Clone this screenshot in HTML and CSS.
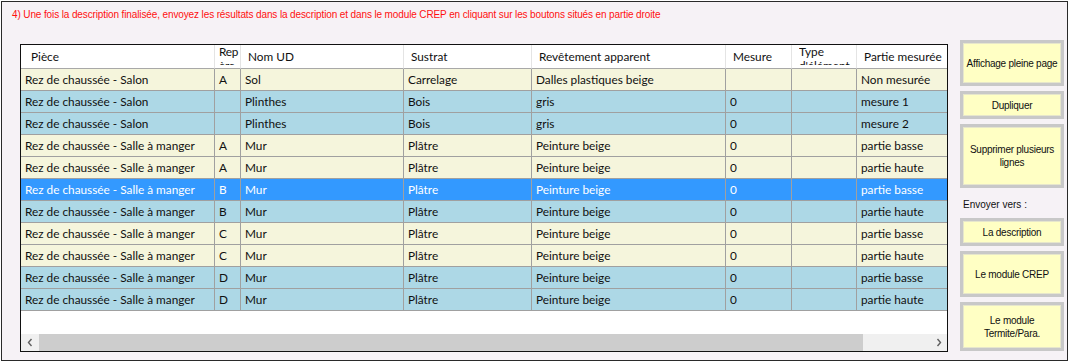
FILE: index.html
```html
<!DOCTYPE html>
<html lang="fr">
<head>
<meta charset="utf-8">
<title>Description</title>
<link rel="stylesheet" href="styles.css">
</head>
<body>
<div class="frame">
  <p class="msg">4) Une fois la description finalisée, envoyez les résultats dans la description et dans le module CREP en cliquant sur les boutons situés en partie droite</p>
  <div class="main">
    <div class="grid-box">
      <div class="viewport">
        <table class="grid">
          <colgroup>
            <col class="c1"><col class="c2"><col class="c3"><col class="c4"><col class="c5"><col class="c6"><col class="c7"><col class="c8">
          </colgroup>
          <thead>
            <tr>
              <th class="first"><div class="hc">Pièce</div></th>
              <th class="narrow"><div class="hc wrap brk">Repère</div></th>
              <th><div class="hc">Nom UD</div></th>
              <th><div class="hc">Sustrat</div></th>
              <th><div class="hc">Revêtement apparent</div></th>
              <th><div class="hc">Mesure</div></th>
              <th><div class="hc wrap">Type d'élément</div></th>
              <th><div class="hc">Partie mesurée</div></th>
            </tr>
          </thead>
          <tbody>
            <tr class="beige"><td>Rez de chaussée - Salon</td><td>A</td><td>Sol</td><td>Carrelage</td><td>Dalles plastiques beige</td><td></td><td></td><td>Non mesurée</td></tr>
            <tr class="blue"><td>Rez de chaussée - Salon</td><td></td><td>Plinthes</td><td>Bois</td><td>gris</td><td>0</td><td></td><td>mesure 1</td></tr>
            <tr class="blue"><td>Rez de chaussée - Salon</td><td></td><td>Plinthes</td><td>Bois</td><td>gris</td><td>0</td><td></td><td>mesure 2</td></tr>
            <tr class="beige"><td>Rez de chaussée - Salle à manger</td><td>A</td><td>Mur</td><td>Plâtre</td><td>Peinture beige</td><td>0</td><td></td><td>partie basse</td></tr>
            <tr class="beige"><td>Rez de chaussée - Salle à manger</td><td>A</td><td>Mur</td><td>Plâtre</td><td>Peinture beige</td><td>0</td><td></td><td>partie haute</td></tr>
            <tr class="sel"><td>Rez de chaussée - Salle à manger</td><td>B</td><td>Mur</td><td>Plâtre</td><td>Peinture beige</td><td>0</td><td></td><td>partie basse</td></tr>
            <tr class="blue"><td>Rez de chaussée - Salle à manger</td><td>B</td><td>Mur</td><td>Plâtre</td><td>Peinture beige</td><td>0</td><td></td><td>partie haute</td></tr>
            <tr class="beige"><td>Rez de chaussée - Salle à manger</td><td>C</td><td>Mur</td><td>Plâtre</td><td>Peinture beige</td><td>0</td><td></td><td>partie basse</td></tr>
            <tr class="beige"><td>Rez de chaussée - Salle à manger</td><td>C</td><td>Mur</td><td>Plâtre</td><td>Peinture beige</td><td>0</td><td></td><td>partie haute</td></tr>
            <tr class="blue"><td>Rez de chaussée - Salle à manger</td><td>D</td><td>Mur</td><td>Plâtre</td><td>Peinture beige</td><td>0</td><td></td><td>partie basse</td></tr>
            <tr class="blue"><td>Rez de chaussée - Salle à manger</td><td>D</td><td>Mur</td><td>Plâtre</td><td>Peinture beige</td><td>0</td><td></td><td>partie haute</td></tr>
          </tbody>
        </table>
      </div>
      <div class="hscroll">
        <span class="arrow"><svg width="8" height="9" viewBox="0 0 8 9"><path d="M5.5 1 L2.5 4.5 L5.5 8" fill="none" stroke="#606060" stroke-width="1.4"/></svg></span>
        <div class="track"><div class="thumb"></div></div>
        <span class="arrow"><svg width="8" height="9" viewBox="0 0 8 9"><path d="M2.5 1 L5.5 4.5 L2.5 8" fill="none" stroke="#606060" stroke-width="1.4"/></svg></span>
      </div>
    </div>
    <div class="side">
      <button class="btn tall">Affichage pleine page</button>
      <button class="btn short">Dupliquer</button>
      <button class="btn tall2">Supprimer plusieurs lignes</button>
      <div class="label">Envoyer vers :</div>
      <button class="btn short">La description</button>
      <button class="btn tall">Le module CREP</button>
      <button class="btn tall3">Le module<br>Termite/Para.</button>
    </div>
  </div>
</div>
</body>
</html>
```

FILE: styles.css
```css
* { box-sizing: border-box; }
html, body { margin: 0; padding: 0; background: #ffffff; }
body { font-family: "Lato", "Liberation Sans", sans-serif; }

.frame {
  margin: 1px;
  width: 1067px;
  height: 360px;
  border: 1px solid #2a2a2a;
  background: #f6f2f6;
  padding: 0;
}

.msg {
  margin: 0;
  padding: 7px 0 0 10px;
  height: 38px;
  font-family: "Liberation Sans", sans-serif;
  font-size: 10px;
  color: #ff1010;
  letter-spacing: -0.12px;
}

.main {
  display: flex;
  align-items: flex-start;
  padding-left: 18px;
}

.grid-box {
  margin-top: 4px;
  width: 928px;
  height: 308px;
  border: 1px solid #111;
  background: #ffffff;
  display: flex;
  flex-direction: column;
}

.viewport {
  flex: 1;
  overflow: hidden;
}

.grid {
  border-collapse: separate;
  border-spacing: 0;
  table-layout: fixed;
  width: 1046px;
  font-size: 11.8px;
  color: #101010;
}

.c1 { width: 194px; }
.c2 { width: 26px; }
.c3 { width: 163px; }
.c4 { width: 128px; }
.c5 { width: 194px; }
.c6 { width: 66px; }
.c7 { width: 65px; }
.c8 { width: 210px; }

.grid th {
  height: 24px;
  padding: 0 0 0 7px;
  font-weight: normal;
  text-align: left;
  border-right: 1px solid #e4e4e4;
  border-bottom: 1px solid #a8a8a8;
  background: #ffffff;
  color: #101010;
  vertical-align: top;
}
.grid th.first { padding-left: 10px; }
.grid th.narrow { padding-left: 4px; }

.hc {
  height: 23px;
  line-height: 24px;
  white-space: nowrap;
  overflow: hidden;
}
.hc.wrap {
  white-space: normal;
  line-height: 14px;
  height: 20px;
  padding-top: 0;
}
.hc.brk { word-break: break-all; letter-spacing: -0.3px; }

.grid td {
  height: 22px;
  padding: 0 0 0 4px;
  white-space: nowrap;
  overflow: hidden;
  border-right: 1px solid #a0a0a0;
  border-bottom: 1px solid #a0a0a0;
}

.beige td { background: #f5f5dc; }
.blue td { background: #add8e6; }
.sel td { background: #3399ff; color: #ffffff; }

.hscroll {
  height: 17px;
  display: flex;
  background: #f0f0f0;
}
.arrow {
  width: 17px;
  display: flex;
  align-items: center;
  justify-content: center;
}
.track { flex: 1; padding: 0 0 0 1px; }
.thumb { width: 824px; height: 17px; background: #cdcdcd; }

.side {
  margin-left: 12px;
  width: 104px;
  display: flex;
  flex-direction: column;
}

.btn {
  display: flex;
  align-items: center;
  justify-content: center;
  text-align: center;
  width: 104px;
  margin: 0 0 5px 0;
  padding: 0 2px;
  border: 3px solid #c8c8c8;
  outline: none;
  background: #ffffc4;
  box-shadow: inset 0 0 0 1px #e6e6cc;
  font-family: "Liberation Sans", sans-serif;
  font-size: 10px;
  letter-spacing: -0.25px;
  line-height: 13px;
  color: #101010;
  white-space: normal;
}
.tall { height: 46px; }
.short { height: 28px; }
.tall2 { height: 64px; }
.tall3 { height: 49px; }

.label {
  height: 25px;
  padding: 6px 0 0 3px;
  font-family: "Liberation Sans", sans-serif;
  font-size: 10px;
  color: #101010;
}
```
